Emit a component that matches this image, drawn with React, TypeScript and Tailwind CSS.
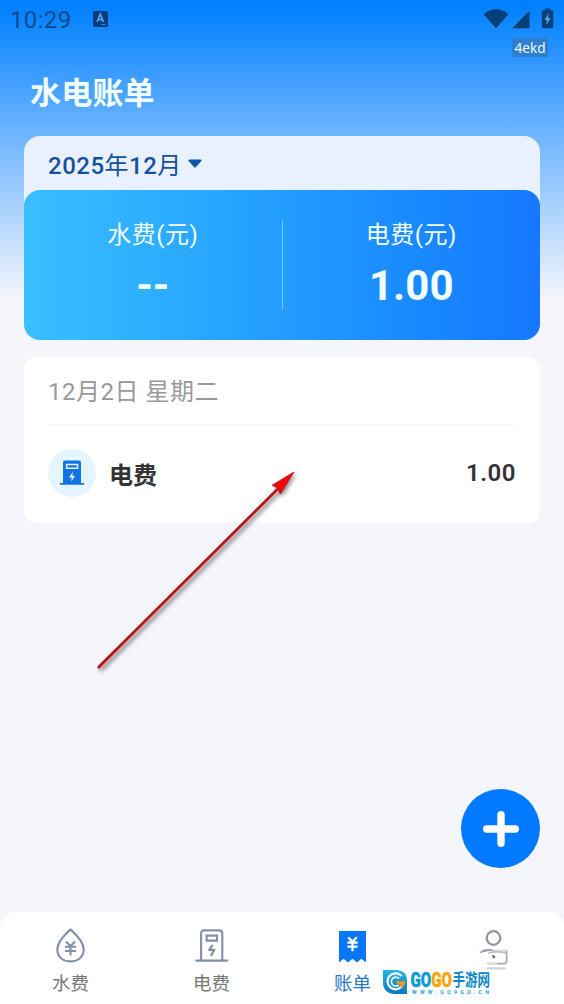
import clsx from "clsx";

const WaterIcon = () => (
  <svg width="36" height="38" viewBox="0 0 36 38" fill="none" stroke="#8490a6" strokeWidth="2.1">
    <path
      d="M17.5 2.5C13.3 6.2 4.3 14 4.3 22.6C4.3 30 9.9 34.4 17.5 34.4S30.7 30 30.7 22.6C30.7 14 21.7 6.2 17.5 2.5Z"
      strokeLinejoin="round"
    />
    <path d="M12.9 14.4L17.5 19L22.1 14.4M11.9 19.8H23.1M11.9 24H23.1M17.5 19V28.6" />
  </svg>
);

const PowerIcon = () => (
  <svg width="36" height="38" viewBox="0 0 36 38" fill="none" stroke="#8490a6" strokeWidth="2.1">
    <path d="M7.1 33.4V6.4Q7.1 3.4 10 3.4H25.4Q28.3 3.4 28.3 6.4V33.4" />
    <path d="M2.3 33.6H33.4" strokeLinecap="round" />
    <path d="M12.6 8.6H23V13.6H12.6Z" />
    <path d="M18.6 17.8L15.2 22.8H20.4L17 28.8" strokeLinejoin="round" strokeWidth="2.3" />
  </svg>
);

const BillIcon = () => (
  <svg width="36" height="38" viewBox="0 0 36 38" fill="none">
    <path
      d="M4 4H31V35.4L26.4 31.8L22 35.4L17.5 31.8L13 35.4L8.6 31.8L4 35.4Z"
      fill="#0878f8"
    />
    <path
      d="M13.2 10.2L17.5 14.8L21.8 10.2M12.4 15.6H22.6M12.4 19.6H22.6M17.5 14.8V24.2"
      stroke="#fff"
      strokeWidth="2.2"
    />
  </svg>
);

const UserIcon = () => (
  <svg width="36" height="46" viewBox="0 0 36 46" fill="none">
    <circle cx="17.5" cy="11" r="6.8" stroke="#8f95a4" strokeWidth="2.3" />
    <path
      d="M3.8 24.6C8 22.6 14 22.8 18 24C23 24.6 28 23 30.6 23.6V34.6Q30.6 36.6 28 36.8L11 36.6"
      stroke="#dadde5"
      strokeWidth="2.6"
    />
    <path d="M3.6 26.4C7 21.2 14 21.8 19 23.6C13 23.8 8 24.8 3.6 26.4Z" fill="#9098a8" />
    <path d="M12 26.4Q20 23.6 30 26.2" stroke="#b0b6c4" strokeWidth="1.2" />
    <path d="M30.6 24V34.4Q30.4 36.6 27 36.6H21" stroke="#a4abba" strokeWidth="1.3" />
    <path d="M16 27.6L19.8 30L17 31.6Z" fill="#46536d" />
    <path d="M11 41.4H30" stroke="#cfd3dc" strokeWidth="2.2" />
  </svg>
);

const tabs = [
  { label: "水费", Icon: WaterIcon },
  { label: "电费", Icon: PowerIcon },
  { label: "账单", Icon: BillIcon, active: true },
  { label: "", Icon: UserIcon },
];

const StatusBar = () => (
  <div className="flex h-[38px] items-center justify-between px-[10px]">
    <div className="flex items-center gap-[21px]">
      <span className="pt-[2px] text-[24px] leading-none tracking-[0.35px] text-[#0b4a8f]">10:29</span>
      <svg width="15" height="16" viewBox="0 0 15 16">
        <rect width="15" height="16" rx="1.6" fill="#073d7c" />
        <path d="M4 11L7.3 3.2L10.6 11M5.2 8.6H9.4" stroke="#5ba5ee" strokeWidth="1.6" fill="none" />
        <path d="M8 13.5H12.5" stroke="#3d83cc" strokeWidth="1" />
      </svg>
    </div>
    <svg width="72" height="22" viewBox="0 0 72 22" fill="#083f78">
      <path d="M1.5 6.2Q14 -3.6 26.5 6.2L14 20.2Z" />
      <path d="M47.5 3.6V20.2H30.2L46 4Q47.5 2.6 47.5 3.6Z" />
      <path d="M60.6 2.4H62.8V0.4H68.2V2.4H70.4Q71.2 2.4 71.2 3.4V19.2Q71.2 20.2 70.2 20.2H60.8Q59.8 20.2 59.8 19.2V3.4Q59.8 2.4 60.6 2.4Z" />
      <path d="M66.6 5L62.6 12H65L64.2 17L68.6 10H65.9Z" fill="#5ba5ee" />
    </svg>
  </div>
);

const Summary = ({ label, value }: { label: string; value: string }) => (
  <div className="flex flex-1 flex-col items-center pt-[29px] text-[#f0ffff]">
    <span className="text-[24px] leading-[32px] tracking-[0.5px]">{label}</span>
    <span className="mt-[10px] text-[42px] font-bold leading-[50px]">{value}</span>
  </div>
);

const Watermark = () => (
  <svg className="absolute left-[382px] top-[966px] overflow-visible" width="130" height="30" viewBox="0 0 130 30">
    <defs>
      <linearGradient id="gogoBlue" x1="0" y1="0" x2="0" y2="1">
        <stop offset="0" stopColor="#2bb5e2" />
        <stop offset="1" stopColor="#0679be" />
      </linearGradient>
      <linearGradient id="gogoText" x1="28" y1="0" x2="70" y2="0" gradientUnits="userSpaceOnUse">
        <stop offset="0.505" stopColor="#1199d2" />
        <stop offset="0.505" stopColor="#fca313" />
      </linearGradient>
    </defs>
    <path d="M1 4H14Q25 4.5 25 15V28H12Q1 27 1 16Z" fill="url(#gogoBlue)" />
    <path d="M19.5 10A8 8 0 1 0 20 20" stroke="#fff" strokeWidth="2.2" fill="none" />
    <path d="M17 12.6A4.4 4.4 0 1 0 16.6 19" stroke="#e8f8ff" strokeWidth="1.8" fill="none" />
    <path d="M13.5 15.2H23Q23 21 18.5 22.4L19 18.5H15.5Z" fill="#f8941d" />
    <text
      x="28.5"
      y="20.5"
      fontFamily="Roboto, 'Liberation Sans', sans-serif"
      fontWeight="900"
      fontSize="21"
      textLength="41.5"
      lengthAdjust="spacingAndGlyphs"
      fill="url(#gogoText)"
      stroke="url(#gogoText)"
      strokeWidth="0.5"
    >
      GOGO
    </text>
    <text
      x="70.5"
      y="20.2"
      fontFamily="'Noto Sans CJK SC', sans-serif"
      fontWeight="700"
      fontSize="16.5"
      textLength="37.5"
      lengthAdjust="spacingAndGlyphs"
      fill="#0989ca"
    >
      手游网
    </text>
    <text
      x="30"
      y="27.5"
      fontFamily="Roboto, sans-serif"
      fontWeight="700"
      fontSize="5.4"
      textLength="77"
      fill="#2a9fd3"
    >
      WWW.GO9GO.CN
    </text>
  </svg>
);

const Arrow = () => (
  <svg
    className="pointer-events-none absolute left-[90px] top-[464px] drop-shadow-[2px_2px_2px_rgba(0,0,0,0.45)]"
    width="212"
    height="210"
    viewBox="0 0 212 210"
  >
    <path d="M9.2 203.7L189 24.6" stroke="#d8aaa4" strokeWidth="3.4" strokeLinecap="round" />
    <path d="M8.8 203L190 22.6" stroke="#b5121d" strokeWidth="2.6" strokeLinecap="round" />
    <path d="M204 8L182.2 21.2L187 23.6L190.4 30Z" fill="#f40505" stroke="#b5121d" strokeWidth="0.8" />
  </svg>
);

const App = () => {
  return (
    <div className="relative flex h-[1004px] w-[564px] flex-col overflow-hidden bg-[#f5f6fb] bg-[linear-gradient(180deg,#0080ff_0px,#0583ff_12px,#6cb4ff_132px,#f5f6fb_300px)] font-[Roboto,'Noto_Sans_CJK_SC',sans-serif]">
      <StatusBar />
      <div className="flex h-5 justify-end pr-4">
        <span className="flex h-[19px] w-[36px] items-center justify-center bg-[#2f7fd0] pt-px font-['Noto_Sans',sans-serif] text-[13.6px] text-[#effcff]">
          4ekd
        </span>
      </div>

      <h1 className="mt-[13px] h-[65px] pl-[30px] text-[31px] font-bold leading-[46px] tracking-[0.2px] text-[#f2ffff]">
        水电账单
      </h1>

      <main className="flex flex-1 flex-col px-6">
        <section className="rounded-[16px] bg-[#eaf1fe]">
          <button className="flex h-[54px] items-center gap-[6px] pl-6 pt-[5px] text-[24px] font-medium tracking-[0.5px] text-[#16529c]">
            <span>
              2025<span className="font-normal">年</span>12<span className="font-normal">月</span>
            </span>
            <svg width="14" height="9" viewBox="0 0 14 9" className="-mt-[4px]">
              <path d="M1 0.5H13Q14 1 13.4 2L8 8Q7 9 6 8L0.6 2Q0 1 1 0.5Z" fill="#0d55a5" />
            </svg>
          </button>
          <div className="flex h-[150px] rounded-[16px] bg-linear-to-r from-[#3abfff] to-[#1677ff]">
            <Summary label="水费(元)" value="--" />
            <div className="my-[30px] w-px bg-white/40" />
            <Summary label="电费(元)" value="1.00" />
          </div>
        </section>

        <section className="mt-[17px] h-[166px] rounded-[12px] bg-white px-6">
          <p className="h-[68px] border-b border-[#f6f7f9] text-[24px] leading-[71px] tracking-[0.5px] text-[#999]">
            12月2日 星期二
          </p>
          <div className="flex h-[96px] items-center">
            <div className="flex size-12 items-center justify-center rounded-full bg-[#e5f5ff]">
              <svg width="26" height="26" viewBox="0 0 26 26">
                <path d="M4 24V2.4Q4 0.6 5.8 0.6H20.2Q22 0.6 22 2.4V24Z" fill="#0f74df" />
                <path d="M1.6 23.8H24.4" stroke="#0f74df" strokeWidth="1.8" strokeLinecap="round" />
                <path d="M7.6 4.4H18.6V8.2H7.6Z" fill="none" stroke="#e5f5ff" strokeWidth="1.5" />
                <path d="M14 11.5L10 17.5H12.8L12.2 21.5L16.2 15.8H13.4Z" fill="#e5f5ff" />
              </svg>
            </div>
            <span className="ml-[13px] mt-[6px] flex-1 text-[24px] font-bold text-[#333]">电费</span>
            <span className="text-[24px] font-semibold tracking-[0.5px] text-[#333]">1.00</span>
          </div>
        </section>
      </main>

      <button className="absolute left-[461px] top-[789px] flex size-[79px] items-center justify-center rounded-full bg-[#027aff]">
        <svg width="38" height="38" viewBox="0 0 38 38" stroke="#fff" strokeWidth="7.4" strokeLinecap="round">
          <path d="M19 4.7V33.3M4.7 19H33.3" />
        </svg>
      </button>

      <nav className="grid h-[92px] grid-cols-4 rounded-t-[16px] bg-white">
        {tabs.map(({ label, Icon, active }, index) => (
          <div key={index} className="flex flex-col items-center pt-[15px]">
            <Icon />
            {label && (
              <span
                className={clsx(
                  "mt-[6px] text-[18.5px] leading-[26px]",
                  active ? "text-[#2878c4]" : "text-[#777]"
                )}
              >
                {label}
              </span>
            )}
          </div>
        ))}
      </nav>

      <Watermark />
      <Arrow />
    </div>
  );
};

export default App;
